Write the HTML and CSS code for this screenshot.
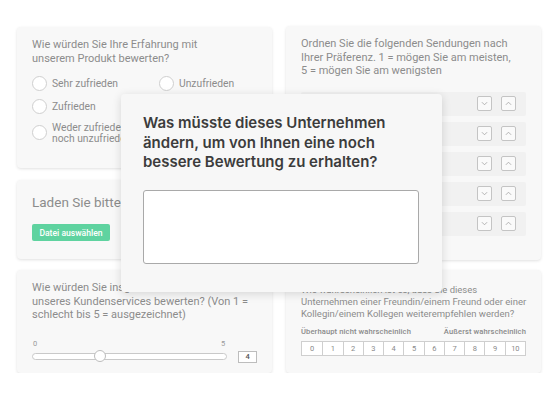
FILE: index.html
```html
<!DOCTYPE html>
<html lang="de">
    <head>
        <meta charset="UTF-8">
        <meta name="viewport" content="width=device-width, initial-scale=1.0">
        <title>Umfrage</title>

        <!-- styling -->
        <link rel="stylesheet" href="styles.css">
    </head>
    <body>
        <main class="board">

            <!-- linke spalte -->
            <div class="column">
                <section class="card card-choice">
                    <p class="question">Wie würden Sie Ihre Erfahrung mit<br>unserem Produkt bewerten?</p>
                    <div class="options">
                        <label class="option"><span class="radio"></span>Sehr zufrieden</label>
                        <label class="option"><span class="radio"></span>Unzufrieden</label>
                        <label class="option"><span class="radio"></span>Zufrieden</label>
                        <label class="option"><span class="radio"></span>Sehr unzufrieden</label>
                        <label class="option option-wide"><span class="radio"></span>Weder zufrieden<br>noch unzufrieden</label>
                    </div>
                </section>

                <section class="card card-upload">
                    <p class="upload-title">Laden Sie bitte Ihre Datei hoch</p>
                    <button class="upload-btn" type="button">Datei auswählen</button>
                </section>

                <section class="card card-slider">
                    <p class="question">Wie würden Sie insgesamt die Qualität<br>unseres Kundenservices bewerten? (Von 1 =<br>schlecht bis 5 = ausgezeichnet)</p>
                    <div class="slider-row">
                        <div class="slider">
                            <div class="slider-labels"><span>0</span><span>5</span></div>
                            <div class="track">
                                <span class="thumb"></span>
                            </div>
                        </div>
                        <span class="slider-value">4</span>
                    </div>
                </section>
            </div>

            <!-- rechte spalte -->
            <div class="column">
                <section class="card card-rank">
                    <p class="question">Ordnen Sie die folgenden Sendungen nach<br>Ihrer Präferenz. 1 = mögen Sie am meisten,<br>5 = mögen Sie am wenigsten</p>
                    <ul class="rank-list">
                        <li class="rank-row">
                            <span class="rank-label">Sendung 1</span>
                            <span class="arrow"><svg viewBox="0 0 15 15"><polyline points="4.5,6 7.5,9 10.5,6"/></svg></span>
                            <span class="arrow"><svg viewBox="0 0 15 15"><polyline points="4.5,9 7.5,6 10.5,9"/></svg></span>
                        </li>
                        <li class="rank-row">
                            <span class="rank-label">Sendung 2</span>
                            <span class="arrow"><svg viewBox="0 0 15 15"><polyline points="4.5,6 7.5,9 10.5,6"/></svg></span>
                            <span class="arrow"><svg viewBox="0 0 15 15"><polyline points="4.5,9 7.5,6 10.5,9"/></svg></span>
                        </li>
                        <li class="rank-row">
                            <span class="rank-label">Sendung 3</span>
                            <span class="arrow"><svg viewBox="0 0 15 15"><polyline points="4.5,6 7.5,9 10.5,6"/></svg></span>
                            <span class="arrow"><svg viewBox="0 0 15 15"><polyline points="4.5,9 7.5,6 10.5,9"/></svg></span>
                        </li>
                        <li class="rank-row">
                            <span class="rank-label">Sendung 4</span>
                            <span class="arrow"><svg viewBox="0 0 15 15"><polyline points="4.5,6 7.5,9 10.5,6"/></svg></span>
                            <span class="arrow"><svg viewBox="0 0 15 15"><polyline points="4.5,9 7.5,6 10.5,9"/></svg></span>
                        </li>
                        <li class="rank-row">
                            <span class="rank-label">Sendung 5</span>
                            <span class="arrow"><svg viewBox="0 0 15 15"><polyline points="4.5,6 7.5,9 10.5,6"/></svg></span>
                            <span class="arrow"><svg viewBox="0 0 15 15"><polyline points="4.5,9 7.5,6 10.5,9"/></svg></span>
                        </li>
                    </ul>
                </section>

                <section class="card card-nps">
                    <p class="question nps-question">Wie wahrscheinlich ist es, dass Sie dieses<br>Unternehmen einer Freundin/einem Freund oder einer<br>Kollegin/einem Kollegen weiterempfehlen werden?</p>
                    <div class="nps-labels"><span>Überhaupt nicht wahrscheinlich</span><span>Äußerst wahrscheinlich</span></div>
                    <div class="nps-scale">
                        <span>0</span><span>1</span><span>2</span><span>3</span><span>4</span><span>5</span>
                        <span>6</span><span>7</span><span>8</span><span>9</span><span>10</span>
                    </div>
                </section>
            </div>

            <!-- offene frage im vordergrund -->
            <section class="modal">
                <h2 class="modal-title">Was müsste dieses Unternehmen ändern, um von Ihnen eine noch bessere Bewertung zu erhalten?</h2>
                <textarea class="modal-input"></textarea>
            </section>
        </main>
    </body>
</html>
```

FILE: styles.css
```css
body {
    font-family: 'Roboto', sans-serif;
    margin: 0;
    padding: 0;
    background-color: #fff;
}

.board {
    position: relative;
    display: grid;
    grid-template-columns: 255px 255px;
    column-gap: 14px;
    padding: 27px 0 0 17px;
}

.column {
    display: flex;
    flex-direction: column;
}

.card {
    box-sizing: border-box;
    background-color: #f8f8f8;
    border-radius: 4px;
    box-shadow: 0 1px 3px rgba(0, 0, 0, 0.12);
    padding: 11px 15px;
    overflow: hidden;
}

.question {
    margin: 0;
    font-size: 11px;
    line-height: 13.5px;
    color: #8c8c8c;
    white-space: nowrap;
}

/* auswahl */
.card-choice {
    height: 141px;
}

.options {
    display: grid;
    grid-template-columns: 127px 1fr;
    grid-template-rows: 15px 15px 22px;
    row-gap: 8px;
    margin-top: 11px;
}

.option {
    display: flex;
    align-items: center;
    font-size: 10.3px;
    line-height: 11px;
    color: #8c8c8c;
}

.option-wide {
    margin-top: -1px;
}

.radio {
    box-sizing: border-box;
    width: 15px;
    height: 15px;
    border: 1px solid #cfcfcf;
    border-radius: 50%;
    background-color: #fff;
    margin-right: 5px;
    flex-shrink: 0;
}

/* upload */
.card-upload {
    height: 79px;
    margin-top: 12px;
    padding-top: 14px;
}

.upload-title {
    margin: 0;
    font-size: 13.5px;
    line-height: 16px;
    color: #8c8c8c;
    white-space: nowrap;
}

.upload-btn {
    display: block;
    margin-top: 14px;
    width: 78px;
    height: 17px;
    border: none;
    border-radius: 2px;
    background-color: #5fd3a0;
    color: #fff;
    font-family: inherit;
    font-size: 8.6px;
    font-weight: 500;
    padding: 0;
}

/* slider */
.card-slider {
    height: 103px;
    margin-top: 11px;
    padding-top: 11px;
}

.slider-row {
    display: flex;
    align-items: flex-end;
    margin-top: 17px;
}

.slider {
    width: 197px;
}

.slider-labels {
    display: flex;
    justify-content: space-between;
    font-size: 7.5px;
    line-height: 9px;
    color: #9a9a9a;
    padding: 0 2px 0 1px;
}

.track {
    position: relative;
    height: 5px;
    border: 1px solid #c9c9c9;
    border-radius: 4px;
    background-color: #fff;
    margin-top: 5px;
}

.thumb {
    position: absolute;
    left: 61px;
    top: -3.5px;
    width: 10px;
    height: 10px;
    border: 1px solid #bdbdbd;
    border-radius: 50%;
    background-color: #fff;
}

.slider-value {
    box-sizing: border-box;
    width: 19px;
    height: 12px;
    margin-left: 11px;
    margin-bottom: -3px;
    border: 1px solid #bdbdbd;
    background-color: #fff;
    font-size: 7.5px;
    font-weight: 500;
    line-height: 10px;
    text-align: center;
    color: #555;
}

/* rangfolge */
.card-rank {
    height: 234px;
    margin-top: -1px;
}

.rank-list {
    list-style: none;
    margin: 14px 0 0;
    padding: 0;
    display: flex;
    flex-direction: column;
    gap: 6px;
}

.rank-row {
    display: flex;
    align-items: center;
    gap: 9px;
    height: 24px;
    padding: 0 10px 0 12px;
    background-color: #f1f1f1;
    border-radius: 2px;
    font-size: 10px;
    color: #8c8c8c;
}

.rank-label {
    margin-right: auto;
}

.arrow {
    box-sizing: border-box;
    width: 15px;
    height: 15px;
    border: 1px solid #c4c4c4;
    border-radius: 2px;
    background-color: #fafafa;
}

.arrow svg {
    display: block;
    width: 13px;
    height: 13px;
    fill: none;
    stroke: #a8a8a8;
    stroke-width: 1;
}

/* weiterempfehlung */
.card-nps {
    height: 103px;
    margin-top: 10px;
    padding-top: 14px;
}

.nps-question {
    font-size: 9.5px;
    line-height: 11.8px;
}

.nps-labels {
    display: flex;
    justify-content: space-between;
    margin-top: 7px;
    font-size: 7.6px;
    line-height: 11px;
    letter-spacing: 0.1px;
    font-weight: 500;
    color: #8a8a8a;
    white-space: nowrap;
}

.nps-scale {
    display: grid;
    grid-template-columns: repeat(11, 1fr);
    margin-top: 4px;
    border: 1px solid #cfcfcf;
    background-color: #fff;
}

.nps-scale span {
    height: 13px;
    line-height: 13px;
    font-size: 7.5px;
    color: #8a8a8a;
    text-align: center;
    border-left: 1px solid #cfcfcf;
}

.nps-scale span:first-child {
    border-left: none;
}

/* modal */
.modal {
    position: absolute;
    left: 121px;
    top: 94px;
    box-sizing: border-box;
    width: 321px;
    height: 198px;
    padding: 19px 23px 0 22px;
    background-color: #f7f7f7;
    border-radius: 4px;
    box-shadow: 0 2px 10px rgba(0, 0, 0, 0.14);
}

.modal-title {
    margin: 0;
    font-family: 'Inter', sans-serif;
    font-size: 15px;
    font-weight: 600;
    line-height: 19.5px;
    color: #3c3c3c;
}

.modal-input {
    display: block;
    box-sizing: border-box;
    width: 276px;
    height: 74px;
    margin-top: 18px;
    border: 1.5px solid #a9a9a9;
    border-radius: 3px;
    background-color: #fff;
    resize: none;
}
```
